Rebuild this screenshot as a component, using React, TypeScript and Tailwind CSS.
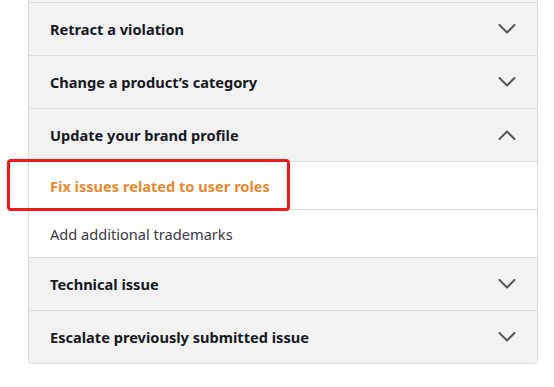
const font = { fontFamily: '"Noto Sans", "Open Sans", Arial, sans-serif' };

function Chevron({ up = false }: { up?: boolean }) {
  return (
    <svg width="18" height="10" viewBox="0 0 18 10" fill="none" className="text-[#555555]">
      <polyline
        points={up ? "1.5,9 9,1.5 16.5,9" : "1.5,1 9,8.5 16.5,1"}
        stroke="currentColor"
        strokeWidth="2"
        strokeLinecap="round"
        strokeLinejoin="round"
      />
    </svg>
  );
}

function Row({ title, open = false }: { title: string; open?: boolean }) {
  return (
    <div className="flex h-[53px] items-center justify-between border-b border-[#dddddd] bg-[#f2f2f2] pl-[21px] pr-[21px]">
      <span className="pt-[2px] text-[14.6px] font-bold text-[#16191f]">{title}</span>
      <Chevron up={open} />
    </div>
  );
}

export default function App() {
  return (
    <div className="h-[387px] w-[554px] overflow-hidden bg-white" style={font}>
      <div className="ml-[28px] w-[510px] rounded-b-[4px] border-x border-b border-[#dddddd]">
        {/* previous row peeking in at the top */}
        <div className="h-[3px] border-b border-[#dddddd] bg-[#f2f2f2]" />
        <Row title="Retract a violation" />
        <Row title="Change a product’s category" />
        <Row title="Update your brand profile" open />

        {/* expanded sub-items */}
        <div className="relative flex h-[48px] items-center border-b border-[#dddddd] bg-white pl-[21px]">
          <span className="pt-[2px] text-[14.6px] font-bold text-[#e8892f]">Fix issues related to user roles</span>
          {/* highlight box */}
          <div className="pointer-events-none absolute left-[-22px] top-[-3px] h-[52px] w-[283px] rounded-[4px] border-[3px] border-[#f01818]" />
        </div>
        <div className="flex h-[48px] items-center border-b border-[#dddddd] bg-white pl-[21px]">
          <span className="pt-[2px] text-[14.6px] text-[#3a3846]">Add additional trademarks</span>
        </div>

        <Row title="Technical issue" />
        <div className="-mb-px overflow-hidden rounded-b-[4px]">
          <Row title="Escalate previously submitted issue" />
        </div>
      </div>
    </div>
  );
}
